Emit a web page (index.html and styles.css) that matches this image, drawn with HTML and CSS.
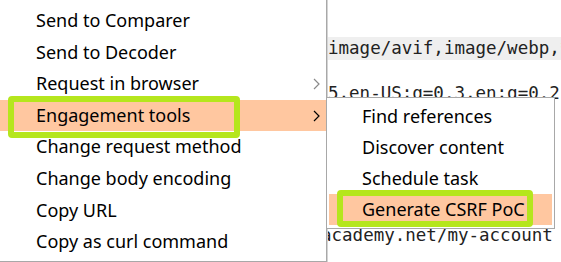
FILE: index.html
```html
<!DOCTYPE html>
<html lang="en">
<head>
  <meta charset="UTF-8" />
  <title>Context menu</title>
  <link rel="stylesheet" href="styles.css">
</head>
<body>
  <div class="screen">

    <!-- request editor behind the menu -->
    <div class="editor">
      <div class="line line-hl">image/avif,image/webp,*/*;q=0.8</div>
      <div class="line line-2">5,en-US;q=0.3,en;q=0.2</div>
      <div class="line line-last"><span class="shift">academy.net/my-account</span></div>
    </div>

    <ul class="menu">
      <li class="item">Send to Comparer</li>
      <li class="item">Send to Decoder</li>
      <li class="item">Request in browser
        <svg class="chev dim" width="7" height="12" viewBox="0 0 7 12"><polyline points="1,1 6,6 1,11" /></svg>
      </li>
      <li class="item active">Engagement tools
        <svg class="chev" width="7" height="12" viewBox="0 0 7 12"><polyline points="1,1 6,6 1,11" /></svg>
      </li>
      <li class="item">Change request method</li>
      <li class="item">Change body encoding</li>
      <li class="item">Copy URL</li>
      <li class="item">Copy as curl command</li>
    </ul>

    <ul class="menu submenu">
      <li class="item">Find references</li>
      <li class="item">Discover content</li>
      <li class="item">Schedule task</li>
      <li class="item active">Generate CSRF PoC</li>
    </ul>

    <!-- annotation boxes -->
    <div class="mark mark-main"></div>
    <div class="mark mark-sub"></div>
  </div>
</body>
</html>
```

FILE: styles.css
```css
body {
  margin: 0;
  background: #fff;
}

.screen {
  position: relative;
  width: 561px;
  height: 262px;
  overflow: hidden;
  background: #fff;
}

.editor {
  margin-left: 327px;
  height: 262px;
  border-left: 1px solid #d4d4d4;
  overflow: hidden;
  font-family: "DejaVu Sans Mono", "Liberation Mono", monospace;
  font-size: 17.5px;
  color: #222;
  white-space: nowrap;
}

.line {
  height: 23px;
  line-height: 23px;
}

.line-hl {
  margin-top: 37px;
  background: #efefef;
}

.line-2 { margin-top: 22px; }

.line-last { margin-top: 119px; }

.shift {
  display: inline-block;
  margin-left: -7px;
}

.menu {
  position: absolute;
  top: -2px;
  left: -2px;
  width: 327px;
  margin: 0;
  padding: 6px 0 3px;
  list-style: none;
  background: #fff;
  border: 1px solid #a8a8a8;
  font-family: "Noto Sans", "Open Sans", sans-serif;
  font-size: 18px;
  color: #000;
}

.item {
  position: relative;
  height: 31.6px;
  line-height: 31.6px;
  padding-left: 37px;
  white-space: nowrap;
}

.item.active {
  background: #ffc7a0;
}

.chev {
  position: absolute;
  right: 6px;
  top: 10px;
}

.chev polyline {
  fill: none;
  stroke: #000;
  stroke-width: 1.2;
}

.chev.dim polyline { stroke: #8a8a8a; }

.submenu {
  top: 97px;
  left: 326px;
  width: 223px;
  padding: 3px 2px 3px;
}

.submenu .item {
  height: 31px;
  line-height: 31px;
  padding-left: 33px;
}

.mark {
  position: absolute;
  border: 6px solid #b5e61d;
  border-radius: 4px;
  box-sizing: border-box;
}

.mark-main {
  left: 8px;
  top: 96px;
  width: 232px;
  height: 42px;
}

.mark-sub {
  left: 337px;
  top: 190px;
  width: 196px;
  height: 37px;
}
```
